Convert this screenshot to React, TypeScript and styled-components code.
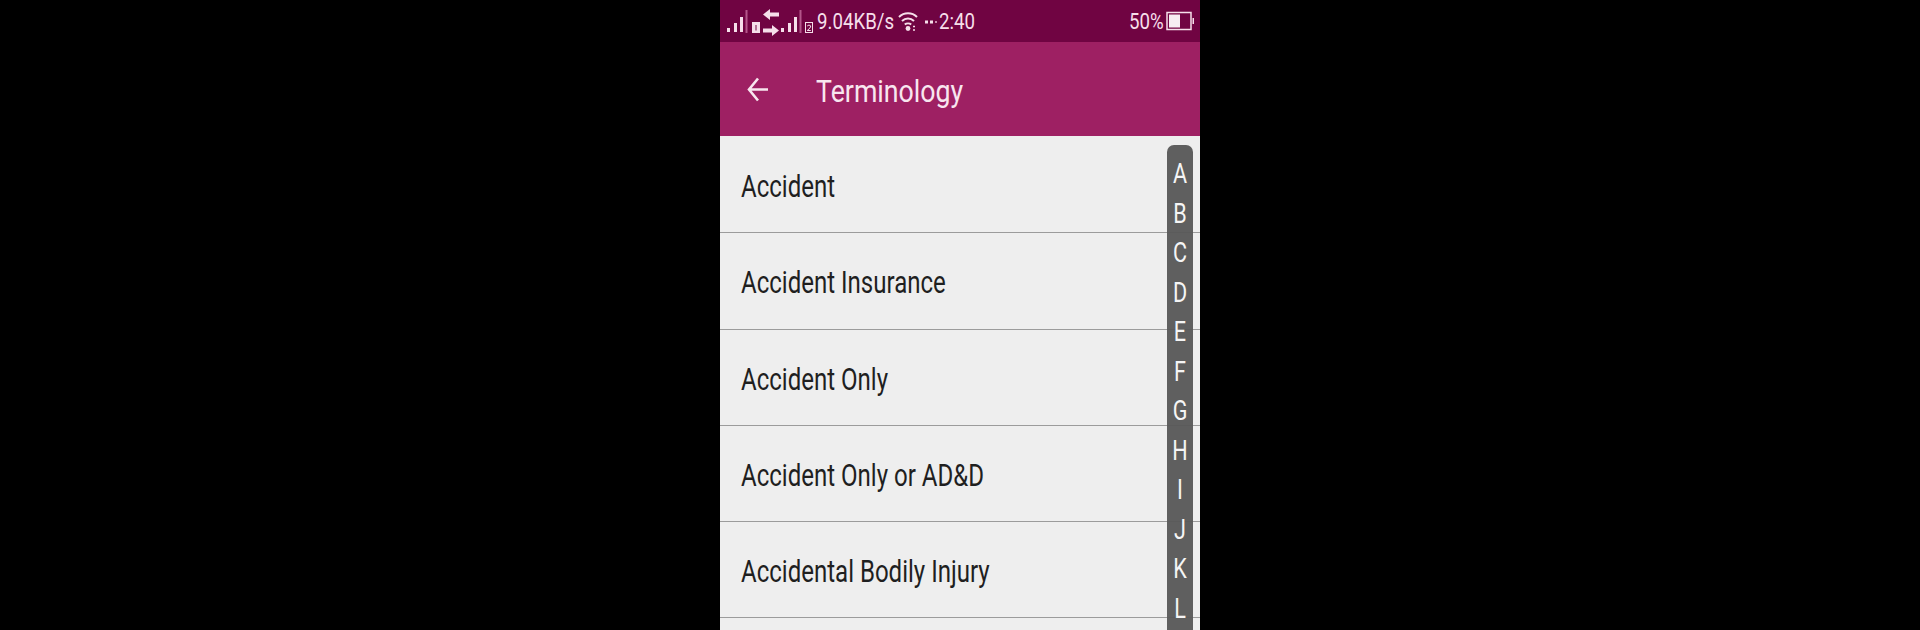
import React from 'react'
import styled, { createGlobalStyle } from 'styled-components'

const GlobalStyle = createGlobalStyle`
  html, body {
    margin: 0;
    padding: 0;
    height: 630px;
    background: #000;
    overflow: hidden;
    font-family: Roboto, "Liberation Sans", sans-serif;
  }
`

const Page = styled.div`
  display: flex;
  justify-content: center;
  height: 630px;
  overflow: hidden;
  background: #000;
`

const Phone = styled.div`
  position: relative;
  width: 480px;
  height: 630px;
  overflow: hidden;
  background: #eeeeee;
`

const StatusBar = styled.div`
  display: flex;
  align-items: center;
  justify-content: space-between;
  height: 42px;
  padding: 0 6px;
  box-sizing: border-box;
  background: #700442;
  color: #f6dfea;
`

const StatusGroup = styled.div`
  display: flex;
  align-items: center;
`

const StatusText = styled.span<{ $left: number; $width: number }>`
  display: inline-block;
  width: ${p => p.$width}px;
  margin-left: ${p => p.$left}px;
  font-size: 22.5px;
  line-height: 42px;
  white-space: nowrap;
  transform: scale(0.83, 1);
  transform-origin: left center;
`

const AppBar = styled.header`
  display: flex;
  align-items: center;
  height: 94px;
  padding-left: 27px;
  box-sizing: border-box;
  background: #9e2063;
  color: #f8e6ef;
`

const Title = styled.h1`
  margin: 4px 0 0 48px;
  font-size: 32px;
  font-weight: 400;
  line-height: 90px;
  transform: scale(0.835, 1);
  transform-origin: left center;
`

const List = styled.ul`
  margin: 1px 0 0;
  padding: 0;
  list-style: none;
`

const Row = styled.li`
  display: flex;
  align-items: center;
  height: 96.3px;
  padding: 4px 0 0 21px;
  box-sizing: border-box;
  border-bottom: 1.5px solid #9b9b9b;
  color: #1f1f1f;
  font-size: 31px;
`

const RowLabel = styled.span`
  display: inline-block;
  white-space: nowrap;
  transform: scale(0.775, 1);
  transform-origin: left center;
`

const IndexBar = styled.nav`
  position: absolute;
  top: 145px;
  left: 447px;
  width: 26px;
  height: 490px;
  padding-top: 8px;
  box-sizing: border-box;
  border-radius: 7px 7px 0 0;
  background: rgba(88, 88, 88, 0.96);
`

const IndexLetter = styled.div`
  height: 39.5px;
  line-height: 43px;
  text-align: center;
  color: #f5f5f5;
  font-size: 27px;
  transform: scale(0.8, 1);
`

const SimSvg = styled.svg<{ $left: number }>`
  flex-shrink: 0;
  margin: 12px 0 0 ${p => p.$left}px;
`

const SignalIcon = () => (
  <svg width="22" height="26" viewBox="0 0 22 26">
    <g fill="#f6dfea">
      <rect x="1" y="20" width="3" height="4" />
      <rect x="8" y="15" width="3" height="9" />
      <rect x="14" y="9" width="3" height="15" />
    </g>
    <rect x="19.5" y="2" width="2" height="23" fill="#b3568a" />
  </svg>
)

const SimBadge = ({ n, left }: { n: string; left: number }) => (
  <SimSvg $left={left} width="8" height="11" viewBox="0 0 8 11">
    <rect x="0.5" y="0.5" width="7" height="10" fill={n === '1' ? '#f6dfea' : 'none'} stroke="#f6dfea" />
    <path d={n === '1' ? 'M4 3v5.5' : 'M2.2 4q1.8-2 3.6 0q0 2-3.6 4.5h3.6'} stroke={n === '1' ? '#700442' : '#f6dfea'} strokeWidth="1" fill="none" />
  </SimSvg>
)

const TransferSvg = styled.svg`
  flex-shrink: 0;
  margin: 4px 1px 0 3px;
`

const TransferIcon = () => (
  <TransferSvg width="16" height="30" viewBox="0 0 16 30">
    <path d="M7 1L0 6.5L7 12V8.5h9v-4H7zM9 17l7 5.5L9 28v-3.5H0v-4h9z" fill="#f6dfea" />
  </TransferSvg>
)

const WifiSvg = styled.svg`
  flex-shrink: 0;
  margin-left: 4px;
`

const WifiIcon = () => (
  <WifiSvg width="20" height="22" viewBox="0 0 20 22" fill="none" stroke="#f6dfea" strokeWidth="2">
    <path d="M1 7C6 2 14 2 19 7" />
    <path d="M4 11C7.5 7.5 12.5 7.5 16 11" />
    <path d="M6.8 14.5C8.5 13 11.5 13 13.2 14.5" />
    <circle cx="10" cy="18.5" r="2.4" fill="#f6dfea" stroke="none" />
    <path d="M15 16.5h2M15 20h2" strokeWidth="1.4" />
  </WifiSvg>
)

const DotsSvg = styled.svg`
  flex-shrink: 0;
  margin: 2px 0 0 7px;
`

const Dots = () => (
  <DotsSvg width="12" height="6" viewBox="0 0 12 6">
    <rect x="0" y="1.5" width="3" height="3" fill="#f6dfea" />
    <rect x="5" y="1.5" width="3" height="3" fill="#f6dfea" />
    <rect x="10" y="2" width="2" height="2" fill="#c98aac" />
  </DotsSvg>
)

const BatterySvg = styled.svg`
  flex-shrink: 0;
`

const BatteryIcon = () => (
  <BatterySvg width="28" height="20" viewBox="0 0 28 20">
    <rect x="1" y="1.5" width="24" height="17" fill="none" stroke="#f6dfea" strokeWidth="1.5" />
    <rect x="3" y="3.5" width="11" height="13" fill="#f6eef2" />
    <rect x="26.5" y="7" width="1.5" height="6" fill="#f6dfea" />
  </BatterySvg>
)

const BackIcon = () => (
  <svg width="21" height="25" viewBox="0 0 21 25" fill="none" stroke="#f8e6ef" strokeWidth="2.6">
    <path d="M21 12.5H2M11 1.5L2 12.5L11 23.5" />
  </svg>
)

const terms = ['Accident', 'Accident Insurance', 'Accident Only', 'Accident Only or AD&D', 'Accidental Bodily Injury']
const letters = 'ABCDEFGHIJKL'.split('')

export default function App() {
  return (
    <Page>
      <GlobalStyle />
      <Phone>
        <StatusBar>
          <StatusGroup>
            <SignalIcon />
            <SimBadge n="1" left={4} />
            <TransferIcon />
            <SignalIcon />
            <SimBadge n="2" left={3} />
            <StatusText $left={4} $width={77}>9.04KB/s</StatusText>
            <WifiIcon />
            <Dots />
            <StatusText $left={2} $width={36}>2:40</StatusText>
          </StatusGroup>
          <StatusGroup>
            <StatusText $left={0} $width={37}>50%</StatusText>
            <BatteryIcon />
          </StatusGroup>
        </StatusBar>
        <AppBar>
          <BackIcon />
          <Title>Terminology</Title>
        </AppBar>
        <List>
          {terms.map(term => (
            <Row key={term}>
              <RowLabel>{term}</RowLabel>
            </Row>
          ))}
        </List>
        <IndexBar>
          {letters.map(l => (
            <IndexLetter key={l}>{l}</IndexLetter>
          ))}
        </IndexBar>
      </Phone>
    </Page>
  )
}
